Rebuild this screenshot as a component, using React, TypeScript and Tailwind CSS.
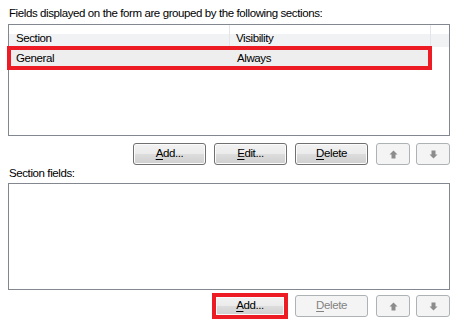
import React from 'react';

type BtnProps = {
  children: React.ReactNode;
  disabled?: boolean;
  className?: string;
};

function Btn({ children, disabled, className = '' }: BtnProps) {
  const look = disabled
    ? 'border-[#adb2b5] bg-[#f4f4f4] text-[#838383]'
    : 'border-[#707070] bg-[linear-gradient(#f2f2f2_0%,#ebebeb_50%,#dddddd_50%,#cfcfcf_100%)] shadow-[inset_0_0_0_1px_#fbfbfb] text-black';
  return (
    <button
      type="button"
      className={`flex items-center justify-center rounded-[3px] border leading-none ${look} ${className}`}
    >
      {children}
    </button>
  );
}

function Arrow({ down }: { down?: boolean }) {
  return (
    <svg width="9" height="9" viewBox="0 0 9 9" className={down ? 'rotate-180' : ''}>
      <path d="M4.5 0.5 L8.5 4.5 L6.5 4.5 L6.5 8.5 L2.5 8.5 L2.5 4.5 L0.5 4.5 Z" fill="#8c8c8c" />
    </svg>
  );
}

function U({ children }: { children: React.ReactNode }) {
  return <span className="underline underline-offset-[2px]">{children}</span>;
}

export default function App() {
  return (
    <div className="w-[457px] h-[325px] bg-white pl-[8px] pr-[7px] pt-[6px] text-[11.5px] tracking-[-0.4px] text-black font-['Segoe_UI','Liberation_Sans',sans-serif]">
      <p className="leading-[15px] pl-[1px]">Fields displayed on the form are grouped by the following sections:</p>

      {/* Sections list */}
      <div className="mt-[3px] h-[112px] border border-[#828790] bg-white">
        <div className="flex h-[22px] bg-[linear-gradient(#ffffff_0%,#ffffff_40%,#f1f2f4_40%,#f1f2f4_100%)]">
          <div className="w-[221px] border-r border-[#e3e5e8] pl-[7px] pt-[6px] leading-[15px]">Section</div>
          <div className="w-[201px] border-r border-[#e3e5e8] pl-[6px] pt-[6px] leading-[15px]">Visibility</div>
        </div>
        <div className="ml-[2px] mt-[3px] flex h-[16px] w-[417px] items-center bg-[#eeeeee] pt-[1px] leading-[15px] outline-[4px] outline-solid outline-[#ed1c24]">
          <div className="w-[219px] pl-[5px]">General</div>
          <div className="pl-[7px]">Always</div>
        </div>
      </div>

      <div className="mt-[7px] flex items-center justify-end">
        <Btn className="h-[22px] w-[73px]"><span><U>A</U>dd...</span></Btn>
        <Btn className="ml-[8px] h-[22px] w-[73px]"><span><U>E</U>dit...</span></Btn>
        <Btn className="ml-[8px] h-[22px] w-[73px]"><span><U>D</U>elete</span></Btn>
        <Btn disabled className="ml-[8px] h-[22px] w-[34px]"><Arrow /></Btn>
        <Btn disabled className="ml-[6px] h-[22px] w-[34px]"><Arrow down /></Btn>
      </div>

      <p className="mt-[1px] leading-[15px] pl-[1px]">Section fields:</p>

      {/* Section fields list */}
      <div className="mt-[2px] h-[107px] border border-[#828790] bg-white" />

      <div className="mt-[3px] flex items-center justify-end">
        <div className="h-[26px] w-[76px] border-4 border-[#ed1c24]">
          <Btn className="h-full w-full rounded-none border-0"><span><U>A</U>dd...</span></Btn>
        </div>
        <Btn disabled className="ml-[7px] h-[22px] w-[73px]"><span><U>D</U>elete</span></Btn>
        <Btn disabled className="ml-[8px] h-[22px] w-[34px]"><Arrow /></Btn>
        <Btn disabled className="ml-[6px] h-[22px] w-[34px]"><Arrow down /></Btn>
      </div>
    </div>
  );
}
